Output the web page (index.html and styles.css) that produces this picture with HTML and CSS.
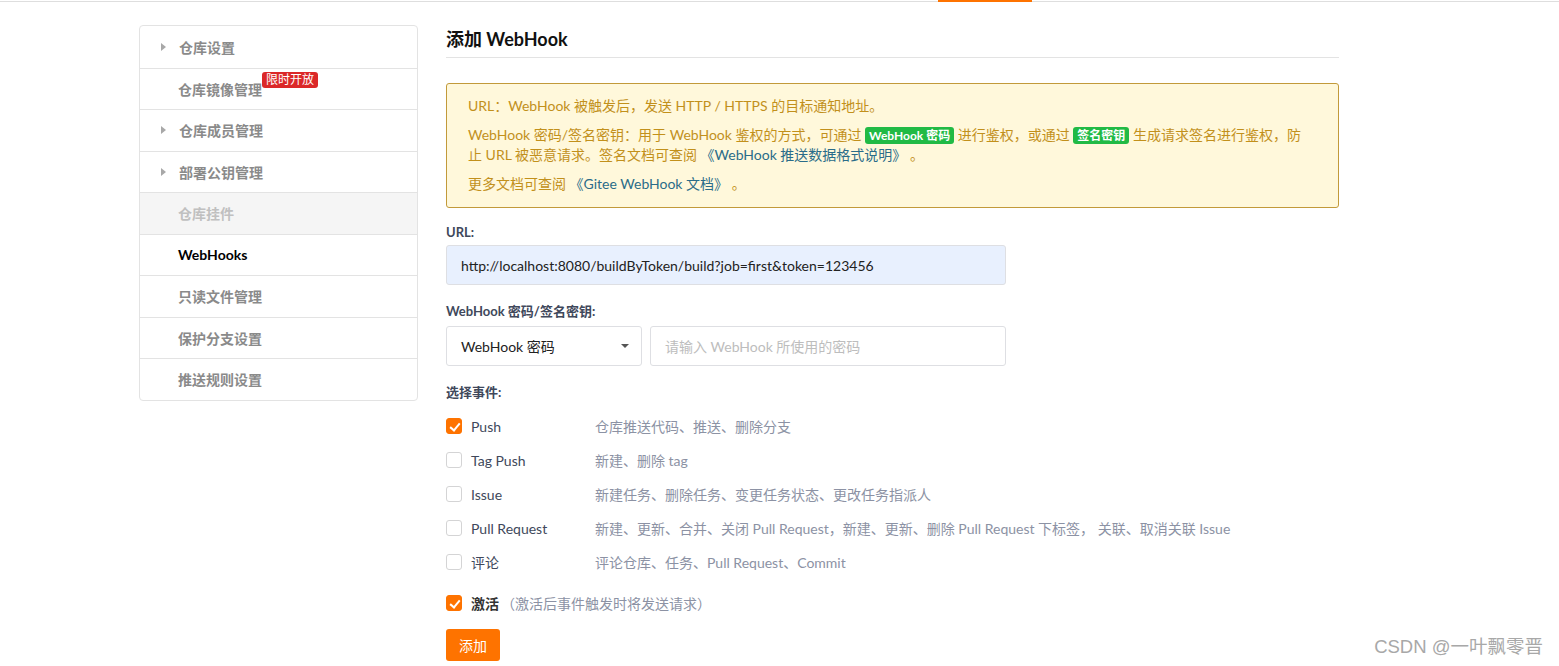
FILE: index.html
```html
<!DOCTYPE html>
<html lang="zh">
<head>
<meta charset="utf-8">
<title>添加 WebHook</title>
<link rel="stylesheet" href="styles.css">
</head>
<body>
<div class="topbar"><span class="tab-indicator"></span></div>
<div class="page">
  <aside class="sidebar">
    <div class="side-item"><span class="caret"></span>仓库设置</div>
    <div class="side-item plain">仓库镜像管理<span class="badge">限时开放</span></div>
    <div class="side-item"><span class="caret"></span>仓库成员管理</div>
    <div class="side-item"><span class="caret"></span>部署公钥管理</div>
    <div class="side-item plain disabled">仓库挂件</div>
    <div class="side-item plain active">WebHooks</div>
    <div class="side-item plain">只读文件管理</div>
    <div class="side-item plain">保护分支设置</div>
    <div class="side-item plain">推送规则设置</div>
  </aside>
  <main class="main">
    <h2 class="title">添加 WebHook</h2>
    <div class="notice">
      <p>URL：WebHook 被触发后，发送 HTTP / HTTPS 的目标通知地址。</p>
      <p>WebHook 密码/签名密钥：用于 WebHook 鉴权的方式，可通过 <span class="tag">WebHook 密码</span> 进行鉴权，或通过 <span class="tag">签名密钥</span> 生成请求签名进行鉴权，防止 URL 被恶意请求。签名文档可查阅 <a class="link">《WebHook 推送数据格式说明》</a> 。</p>
      <p>更多文档可查阅 <a class="link">《Gitee WebHook 文档》</a> 。</p>
    </div>
    <div class="field first">
      <label class="label">URL:</label>
      <div class="input url">http://localhost:8080/buildByToken/build?job=first&amp;token=123456</div>
    </div>
    <div class="field">
      <label class="label spaced">WebHook 密码/签名密钥:</label>
      <div class="row">
        <div class="input select">WebHook 密码<span class="dropdown"></span></div>
        <div class="input pwd placeholder">请输入 WebHook 所使用的密码</div>
      </div>
    </div>
    <div class="field">
      <label class="label">选择事件:</label>
      <div class="events">
        <div class="event"><span class="check on"></span><span class="ev-name">Push</span><span class="ev-desc">仓库推送代码、推送、删除分支</span></div>
        <div class="event"><span class="check"></span><span class="ev-name">Tag Push</span><span class="ev-desc">新建、删除 tag</span></div>
        <div class="event"><span class="check"></span><span class="ev-name">Issue</span><span class="ev-desc">新建任务、删除任务、变更任务状态、更改任务指派人</span></div>
        <div class="event"><span class="check"></span><span class="ev-name">Pull Request</span><span class="ev-desc">新建、更新、合并、关闭 Pull Request，新建、更新、删除 Pull Request 下标签， 关联、取消关联 Issue</span></div>
        <div class="event"><span class="check"></span><span class="ev-name">评论</span><span class="ev-desc">评论仓库、任务、Pull Request、Commit</span></div>
      </div>
    </div>
    <div class="activate"><span class="check on"></span><span class="act-name">激活</span><span class="act-desc">（激活后事件触发时将发送请求）</span></div>
    <button class="btn">添加</button>
  </main>
</div>
<div class="watermark">CSDN @一叶飘零晋</div>
</body>
</html>
```

FILE: styles.css
```css
* { box-sizing: border-box; }
html, body { margin: 0; padding: 0; }
body {
  background: #fff;
  font-family: "Lato", "Noto Sans CJK SC", sans-serif;
  font-size: 14px;
  color: #40485b;
  height: 666px;
  overflow: hidden;
  position: relative;
}
.topbar {
  height: 2px;
  border-bottom: 1px solid #dedede;
  display: flex;
  align-items: flex-start;
}
.tab-indicator {
  margin-left: 938px;
  width: 94px;
  height: 2px;
  background: #fe7300;
}
.page {
  display: flex;
  align-items: flex-start;
  padding-left: 139px;
  padding-top: 23px;
}
.sidebar {
  width: 279px;
  border: 1px solid #e3e3e3;
  border-radius: 4px;
  overflow: hidden;
}
.side-item {
  height: 41.5px;
  display: flex;
  align-items: center;
  padding-left: 21px;
  border-top: 1px solid #e3e3e3;
  color: #8a8a8a;
  font-size: 14px;
  font-weight: 600;
}
.side-item:first-child { border-top: none; }
.side-item.plain { padding-left: 38px; }
.side-item.disabled { background: #f5f5f5; color: #c0c0c0; }
.side-item.active { color: #000; font-weight: 700; }
.caret {
  width: 0; height: 0;
  border-top: 4px solid transparent;
  border-bottom: 4px solid transparent;
  border-left: 5px solid #a8a8a8;
  margin-right: 13px;
}
.badge {
  position: relative;
  top: -9px;
  background: #db2828;
  color: #fff;
  font-size: 12px;
  font-weight: 400;
  line-height: 16px;
  padding: 0 4px;
  border-radius: 3px;
}
.main {
  margin-left: 28px;
  width: 893px;
}
.title {
  margin: 2px 0 0;
  font-size: 18px;
  font-weight: 700;
  color: #111;
  line-height: 24px;
  padding-bottom: 6px;
  border-bottom: 1px solid #e3e3e3;
}
.notice {
  margin-top: 25px;
  background: #fff8db;
  border: 1px solid #c29a3a;
  border-radius: 3px;
  padding: 12px 27px 13px 21px;
  color: #c2901b;
  font-size: 14px;
  line-height: 20px;
}
.notice p { margin: 0 0 9px; }
.notice p:last-child { margin-bottom: 0; }
.tag {
  display: inline-block;
  background: #21ba45;
  color: #fff;
  font-size: 12px;
  font-weight: 700;
  line-height: 17px;
  padding: 0 4px;
  border-radius: 3px;
}
.link { color: #2a6c89; }
.field { margin-top: 16px; }
.field.first { margin-top: 14px; }
.label {
  display: block;
  font-weight: 700;
  font-size: 13px;
  color: #40485b;
  line-height: 20px;
  margin-bottom: 3px;
}
.label.spaced { margin-bottom: 5px; }
.input {
  height: 40px;
  border: 1px solid #dedfe3;
  border-radius: 3px;
  display: flex;
  align-items: center;
  padding-left: 14px;
  font-size: 14px;
  color: #222;
}
.url { width: 560px; background: #e8f0fe; }
.row { display: flex; gap: 8px; }
.select { width: 196px; justify-content: space-between; padding-right: 12px; }
.dropdown {
  width: 0; height: 0;
  border-left: 4px solid transparent;
  border-right: 4px solid transparent;
  border-top: 4px solid #555;
}
.pwd { width: 356px; }
.placeholder { color: #bdbdbd; }
.events { padding-top: 11px; }
.event {
  display: flex;
  align-items: center;
  height: 20px;
  margin-bottom: 14px;
}
.check {
  width: 16px; height: 16px;
  border: 1px solid #d4d4d5;
  border-radius: 3px;
  background: #fff;
  flex: none;
  position: relative;
}
.check.on { background: #fe7300; border-color: #fe7300; }
.check.on::after {
  content: "";
  position: absolute;
  left: 5px; top: 2px;
  width: 4px; height: 8px;
  border-right: 2px solid #fff;
  border-bottom: 2px solid #fff;
  transform: rotate(40deg);
}
.ev-name { width: 124px; margin-left: 9px; color: #40485b; }
.ev-desc { color: #8c92a4; }
.activate {
  display: flex;
  align-items: center;
  height: 20px;
  margin-top: 21px;
}
.act-name { margin-left: 9px; font-weight: 700; color: #333; }
.act-desc { margin-left: 2px; color: #8c92a4; }
.btn {
  margin-top: 16px;
  height: 32px;
  width: 54px;
  border: none;
  border-radius: 3px;
  background: #fe7300;
  color: #fff;
  font-family: inherit;
  font-size: 14px;
  padding: 0;
}
.watermark {
  position: absolute;
  right: 16px;
  bottom: 8px;
  font-family: "Liberation Sans", "Noto Sans CJK SC", sans-serif;
  font-size: 18.5px;
  color: #a8a8a8;
  text-shadow: 0 0 1px #fff;
}
```
